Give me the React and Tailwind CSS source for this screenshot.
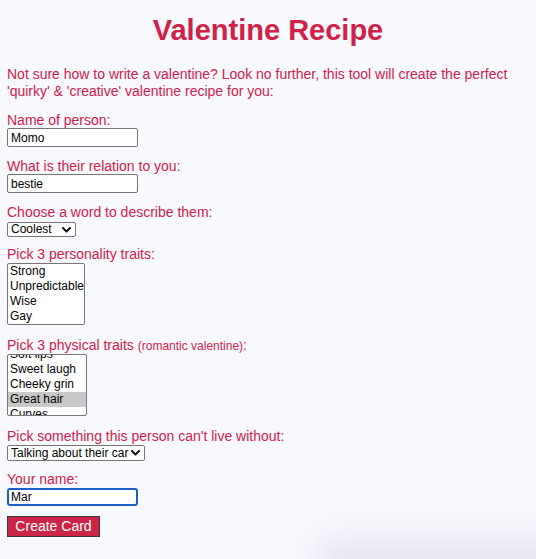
import React from 'react';

const RED = 'text-[#cf2249]';

const Chevron = () => (
  <svg
    className="pointer-events-none absolute right-[5px] top-1/2 -translate-y-1/2"
    width="9"
    height="6"
    viewBox="0 0 9 6"
    fill="none"
  >
    <path d="M1 1l3.5 3.5L8 1" stroke="#111" strokeWidth="2" strokeLinecap="round" strokeLinejoin="round" />
  </svg>
);

const Field = ({ label, className = '', children }) => (
  <div className={className}>
    <label className={`block text-[14px] leading-[16px] ${RED}`}>{label}</label>
    {children}
  </div>
);

const ListBox = ({ options, selected, offset = 0, width }) => (
  <div
    className="h-[62px] overflow-hidden rounded-[2px] border border-[#767676] bg-white"
    style={{ width }}
  >
    <div style={{ marginTop: -offset }}>
      {options.map((o) => (
        <div
          key={o}
          className={`px-[2px] text-[12px] leading-[15px] whitespace-nowrap text-black ${o === selected ? 'bg-[#c8c8c8]' : ''}`}
        >
          {o}
        </div>
      ))}
    </div>
  </div>
);

export default function App() {
  return (
    <div className="relative min-h-screen w-full overflow-hidden bg-[#f8f8ff] px-[7px] font-['Liberation_Sans',Arial,sans-serif]">
      {/* Header */}
      <h1 className={`pt-[14px] text-center text-[29px] leading-[32px] font-bold ${RED}`}>Valentine Recipe</h1>
      <p className={`mt-[20px] text-[14px] leading-[17px] ${RED}`}>
        Not sure how to write a valentine? Look no further, this tool will create the perfect 'quirky' &amp; 'creative'
        valentine recipe for you:
      </p>

      {/* Form */}
      <form onSubmit={(e) => e.preventDefault()}>
        <Field label="Name of person:" className="mt-[12px]">
          <input
            defaultValue="Momo"
            className="block h-[19px] w-[131px] rounded-[2px] border border-[#767676] bg-white px-[3px] text-[12px] text-black outline-none"
          />
        </Field>

        <Field label="What is their relation to you:" className="mt-[11px]">
          <input
            defaultValue="bestie"
            className="block h-[19px] w-[131px] rounded-[2px] border border-[#767676] bg-white px-[3px] text-[12px] text-black outline-none"
          />
        </Field>

        <Field label="Choose a word to describe them:" className="mt-[11px]">
          <div className="relative mt-[2px] w-[69px]">
            <select
              defaultValue="Coolest"
              className="block h-[15px] w-[69px] appearance-none rounded-[2px] border border-[#767676] bg-white pl-[3px] pr-[16px] text-[12px] leading-[13px] text-black outline-none"
            >
              <option>Coolest</option>
              <option>Sweetest</option>
              <option>Funniest</option>
            </select>
            <Chevron />
          </div>
        </Field>

        <Field label="Pick 3 personality traits:" className="mt-[9px]">
          <div className="mt-[1px]">
            <ListBox width={78} options={['Strong', 'Unpredictable', 'Wise', 'Gay', 'Kind', 'Loyal']} />
          </div>
        </Field>

        <div className="mt-[12px]">
          <label className={`block text-[14px] leading-[16px] ${RED}`}>
            Pick 3 physical traits <span className="text-[12px]">(romantic valentine)</span>:
          </label>
          <ListBox
            width={80}
            offset={38}
            selected="Great hair"
            options={['Pretty eyes', 'Cute smile', 'Soft lips', 'Sweet laugh', 'Cheeky grin', 'Great hair', 'Curves', 'Strong arms']}
          />
        </div>

        <Field label="Pick something this person can't live without:" className="mt-[12px]">
          <div className="relative mt-[1px] w-[138px]">
            <select
              defaultValue="car"
              className="block h-[16px] w-[138px] appearance-none rounded-[2px] border border-[#767676] bg-white pl-[3px] pr-[14px] text-[12px] leading-[14px] text-black outline-none"
            >
              <option value="car">Talking about their car</option>
              <option value="coffee">Coffee</option>
              <option value="phone">Their phone</option>
            </select>
            <Chevron />
          </div>
        </Field>

        <Field label="Your name:" className="mt-[10px]">
          <input
            defaultValue="Mar"
            className="mt-[1px] block h-[18px] w-[131px] rounded-[3px] border-2 border-[#1d5fc9] bg-white px-[2px] text-[12px] text-black outline-none"
          />
        </Field>

        <button
          type="submit"
          className="mt-[10px] block h-[21px] w-[93px] border border-[#3a3a3a] bg-[#cc2447] text-[14px] leading-[19px] text-white"
        >
          Create Card
        </button>
      </form>

      {/* faint shadow in the lower right corner */}
      <div className="pointer-events-none absolute bottom-[-24px] right-[-40px] h-[44px] w-[260px] rounded-full bg-[#dcdce6] opacity-70 blur-[16px]" />
    </div>
  );
}
